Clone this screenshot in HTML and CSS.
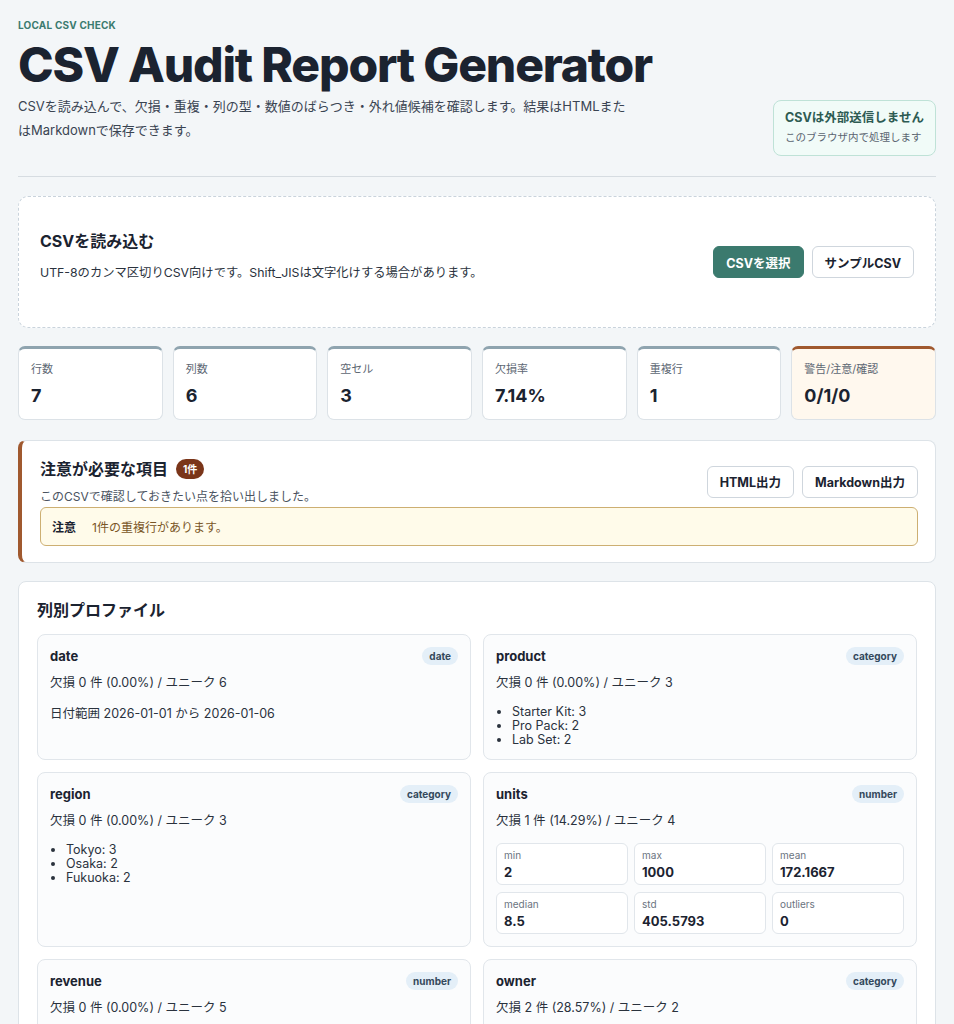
FILE: index.html
```html
<!DOCTYPE html>
<html lang="ja">
<head>
<meta charset="utf-8">
<title>CSV Audit Report Generator</title>
<link rel="stylesheet" href="styles.css">
</head>
<body>
<div class="page">
  <header class="hero">
    <div class="hero-text">
      <div class="eyebrow">LOCAL CSV CHECK</div>
      <h1 class="title">CSV Audit Report Generator</h1>
      <p class="lead">CSVを読み込んで、欠損・重複・列の型・数値のばらつき・外れ値候補を確認します。結果はHTMLまたはMarkdownで保存できます。</p>
    </div>
    <div class="privacy">
      <div class="privacy-title">CSVは外部送信しません</div>
      <div class="privacy-sub">このブラウザ内で処理します</div>
    </div>
  </header>

  <section class="upload">
    <div class="upload-text">
      <h2 class="section-title">CSVを読み込む</h2>
      <p class="upload-note">UTF-8のカンマ区切りCSV向けです。Shift_JISは文字化けする場合があります。</p>
    </div>
    <div class="btn-row">
      <button class="btn btn-primary">CSVを選択</button>
      <button class="btn">サンプルCSV</button>
    </div>
  </section>

  <section class="stats">
    <div class="stat"><div class="stat-label">行数</div><div class="stat-value">7</div></div>
    <div class="stat"><div class="stat-label">列数</div><div class="stat-value">6</div></div>
    <div class="stat"><div class="stat-label">空セル</div><div class="stat-value">3</div></div>
    <div class="stat"><div class="stat-label">欠損率</div><div class="stat-value">7.14%</div></div>
    <div class="stat"><div class="stat-label">重複行</div><div class="stat-value">1</div></div>
    <div class="stat stat-warn"><div class="stat-label">警告/注意/確認</div><div class="stat-value">0/1/0</div></div>
  </section>

  <section class="attention">
    <div class="attention-head">
      <div>
        <h2 class="section-title">注意が必要な項目 <span class="count">1件</span></h2>
        <p class="attention-sub">このCSVで確認しておきたい点を拾い出しました。</p>
      </div>
      <div class="btn-row">
        <button class="btn">HTML出力</button>
        <button class="btn">Markdown出力</button>
      </div>
    </div>
    <div class="notice"><strong>注意</strong><span>1件の重複行があります。</span></div>
  </section>

  <section class="profile">
    <h2 class="section-title">列別プロファイル</h2>
    <div class="col-grid">
      <div class="col-card">
        <div class="col-head"><span class="col-name">date</span><span class="tag">date</span></div>
        <p class="col-line">欠損 0 件 (0.00%) / ユニーク 6</p>
        <p class="col-line">日付範囲 2026-01-01 から 2026-01-06</p>
      </div>
      <div class="col-card">
        <div class="col-head"><span class="col-name">product</span><span class="tag">category</span></div>
        <p class="col-line">欠損 0 件 (0.00%) / ユニーク 3</p>
        <ul class="top-list"><li>Starter Kit: 3</li><li>Pro Pack: 2</li><li>Lab Set: 2</li></ul>
      </div>
      <div class="col-card">
        <div class="col-head"><span class="col-name">region</span><span class="tag">category</span></div>
        <p class="col-line">欠損 0 件 (0.00%) / ユニーク 3</p>
        <ul class="top-list"><li>Tokyo: 3</li><li>Osaka: 2</li><li>Fukuoka: 2</li></ul>
      </div>
      <div class="col-card">
        <div class="col-head"><span class="col-name">units</span><span class="tag">number</span></div>
        <p class="col-line">欠損 1 件 (14.29%) / ユニーク 4</p>
        <div class="num-grid">
          <div class="num"><div class="num-label">min</div><div class="num-value">2</div></div>
          <div class="num"><div class="num-label">max</div><div class="num-value">1000</div></div>
          <div class="num"><div class="num-label">mean</div><div class="num-value">172.1667</div></div>
          <div class="num"><div class="num-label">median</div><div class="num-value">8.5</div></div>
          <div class="num"><div class="num-label">std</div><div class="num-value">405.5793</div></div>
          <div class="num"><div class="num-label">outliers</div><div class="num-value">0</div></div>
        </div>
      </div>
      <div class="col-card">
        <div class="col-head"><span class="col-name">revenue</span><span class="tag">number</span></div>
        <p class="col-line">欠損 0 件 (0.00%) / ユニーク 5</p>
        <div class="num-grid">
          <div class="num"><div class="num-label">min</div><div class="num-value">1200</div></div>
          <div class="num"><div class="num-label">max</div><div class="num-value">98000</div></div>
          <div class="num"><div class="num-label">mean</div><div class="num-value">17842.8571</div></div>
        </div>
      </div>
      <div class="col-card">
        <div class="col-head"><span class="col-name">owner</span><span class="tag">category</span></div>
        <p class="col-line">欠損 2 件 (28.57%) / ユニーク 2</p>
        <ul class="top-list"><li>Sato: 3</li><li>Suzuki: 2</li></ul>
      </div>
    </div>
  </section>
</div>
</body>
</html>
```

FILE: styles.css
```css
* { box-sizing: border-box; }

html, body {
  margin: 0;
  padding: 0;
}

body {
  background: #f3f6f8;
  color: #1b2330;
  font-family: Inter, "Noto Sans CJK JP", "Noto Sans", sans-serif;
}

.page {
  padding: 18px 18px 40px;
}

.hero {
  display: flex;
  justify-content: space-between;
  align-items: flex-end;
  padding-bottom: 20px;
  border-bottom: 1px solid #d6dce1;
}

.eyebrow {
  font-size: 10px;
  line-height: 14px;
  font-weight: 700;
  color: #3b7b6f;
  letter-spacing: 0.02em;
}

.title {
  margin: 4px 0 0;
  font-size: 48px;
  line-height: 58px;
  font-weight: 800;
  letter-spacing: -0.025em;
  color: #1b2330;
}

.lead {
  margin: 0 0 14px;
  max-width: 616px;
  font-size: 13px;
  line-height: 24px;
  color: #3a4452;
}

.privacy {
  background: #f1fbf8;
  border: 1px solid #bfe2d7;
  border-radius: 8px;
  padding: 7px 11px 9px;
}

.privacy-title {
  font-size: 12.5px;
  line-height: 20px;
  font-weight: 700;
  color: #2e5b53;
}

.privacy-sub {
  margin-top: 2px;
  font-size: 10.5px;
  line-height: 16px;
  color: #5a6470;
}

.upload {
  margin-top: 19px;
  background: #fff;
  border: 1px dashed #c9d3dc;
  border-radius: 10px;
  padding: 32px 21px;
  display: flex;
  justify-content: space-between;
  align-items: center;
}

.section-title {
  margin: 0;
  font-size: 16px;
  line-height: 24px;
  font-weight: 700;
  color: #1b2330;
  display: flex;
  align-items: center;
  gap: 8px;
}

.upload-note {
  margin: 10px 0 12px;
  font-size: 12.3px;
  line-height: 20px;
  color: #2a323d;
}

.btn-row {
  display: flex;
  gap: 8px;
}

.btn {
  font-family: inherit;
  font-size: 12.5px;
  font-weight: 700;
  height: 32px;
  padding: 0 12px;
  border-radius: 6px;
  border: 1px solid #cfd6dd;
  background: #fff;
  color: #1b2330;
}

.btn-primary {
  background: #3b7a6e;
  border-color: #3b7a6e;
  color: #fff;
}

.stats {
  margin-top: 18px;
  display: grid;
  grid-template-columns: repeat(6, 1fr);
  gap: 10px;
}

.stat {
  background: #fff;
  border: 1px solid #dce2e7;
  border-top: 3px solid #8fa4af;
  border-radius: 7px;
  padding: 12px 12px 11px;
}

.stat-warn {
  background: #fff8ee;
  border-top-color: #a0592f;
}

.stat-label {
  font-size: 11px;
  line-height: 16px;
  color: #5d6773;
}

.stat-value {
  margin-top: 7px;
  font-size: 18px;
  line-height: 24px;
  font-weight: 700;
  color: #1b2330;
}

.attention {
  margin-top: 20px;
  background: #fff;
  border: 1px solid #dde3e8;
  border-left: 4px solid #a0592f;
  border-radius: 8px;
  padding: 16px 17px 16px 18px;
}

.attention-head {
  display: flex;
  justify-content: space-between;
  align-items: center;
}

.count {
  display: inline-flex;
  align-items: center;
  justify-content: center;
  height: 20px;
  padding: 0 7px;
  border-radius: 10px;
  background: #7a3519;
  color: #fff;
  font-size: 10px;
  font-weight: 700;
}

.attention-sub {
  margin: 7px 0 0;
  font-size: 12px;
  line-height: 18px;
  color: #4a5360;
}

.notice {
  margin-top: 1px;
  height: 39px;
  display: flex;
  align-items: center;
  gap: 16px;
  padding: 0 11px;
  background: #fffbea;
  border: 1px solid #cdaf72;
  border-radius: 6px;
  font-size: 12px;
}

.notice strong {
  color: #1b2330;
}

.notice span {
  color: #7a5626;
}

.profile {
  margin-top: 18px;
  background: #fff;
  border: 1px solid #dde3e8;
  border-radius: 8px;
  padding: 16px 18px 18px;
}

.col-grid {
  margin-top: 12px;
  display: grid;
  grid-template-columns: 1fr 1fr;
  gap: 12px;
}

.col-card {
  background: #fbfcfd;
  border: 1px solid #e1e6eb;
  border-radius: 8px;
  padding: 12px;
}

.col-head {
  display: flex;
  justify-content: space-between;
  align-items: center;
  height: 18px;
}

.col-name {
  font-size: 13px;
  font-weight: 700;
  color: #1b2330;
}

.tag {
  font-size: 10px;
  font-weight: 700;
  line-height: 18px;
  padding: 0 7px;
  border-radius: 9px;
  background: #e4eff8;
  color: #34495c;
}

.col-line {
  margin: 8px 0 0;
  font-size: 12.5px;
  line-height: 20px;
  color: #2a323d;
}

.col-line + .col-line {
  margin-top: 11px;
}

.top-list {
  margin: 12px 0 0;
  padding-left: 16px;
  font-size: 12.5px;
  line-height: 14px;
  color: #2a323d;
}

.num-grid {
  margin-top: 12px;
  display: grid;
  grid-template-columns: repeat(3, 1fr);
  gap: 7px 6px;
}

.num {
  background: #fff;
  border: 1px solid #e1e6eb;
  border-radius: 6px;
  padding: 5px 7px 6px;
  height: 42px;
}

.num-label {
  font-size: 10px;
  line-height: 13px;
  color: #6b7480;
}

.num-value {
  margin-top: 2px;
  font-size: 13px;
  line-height: 16px;
  font-weight: 700;
  color: #1b2330;
}
```
